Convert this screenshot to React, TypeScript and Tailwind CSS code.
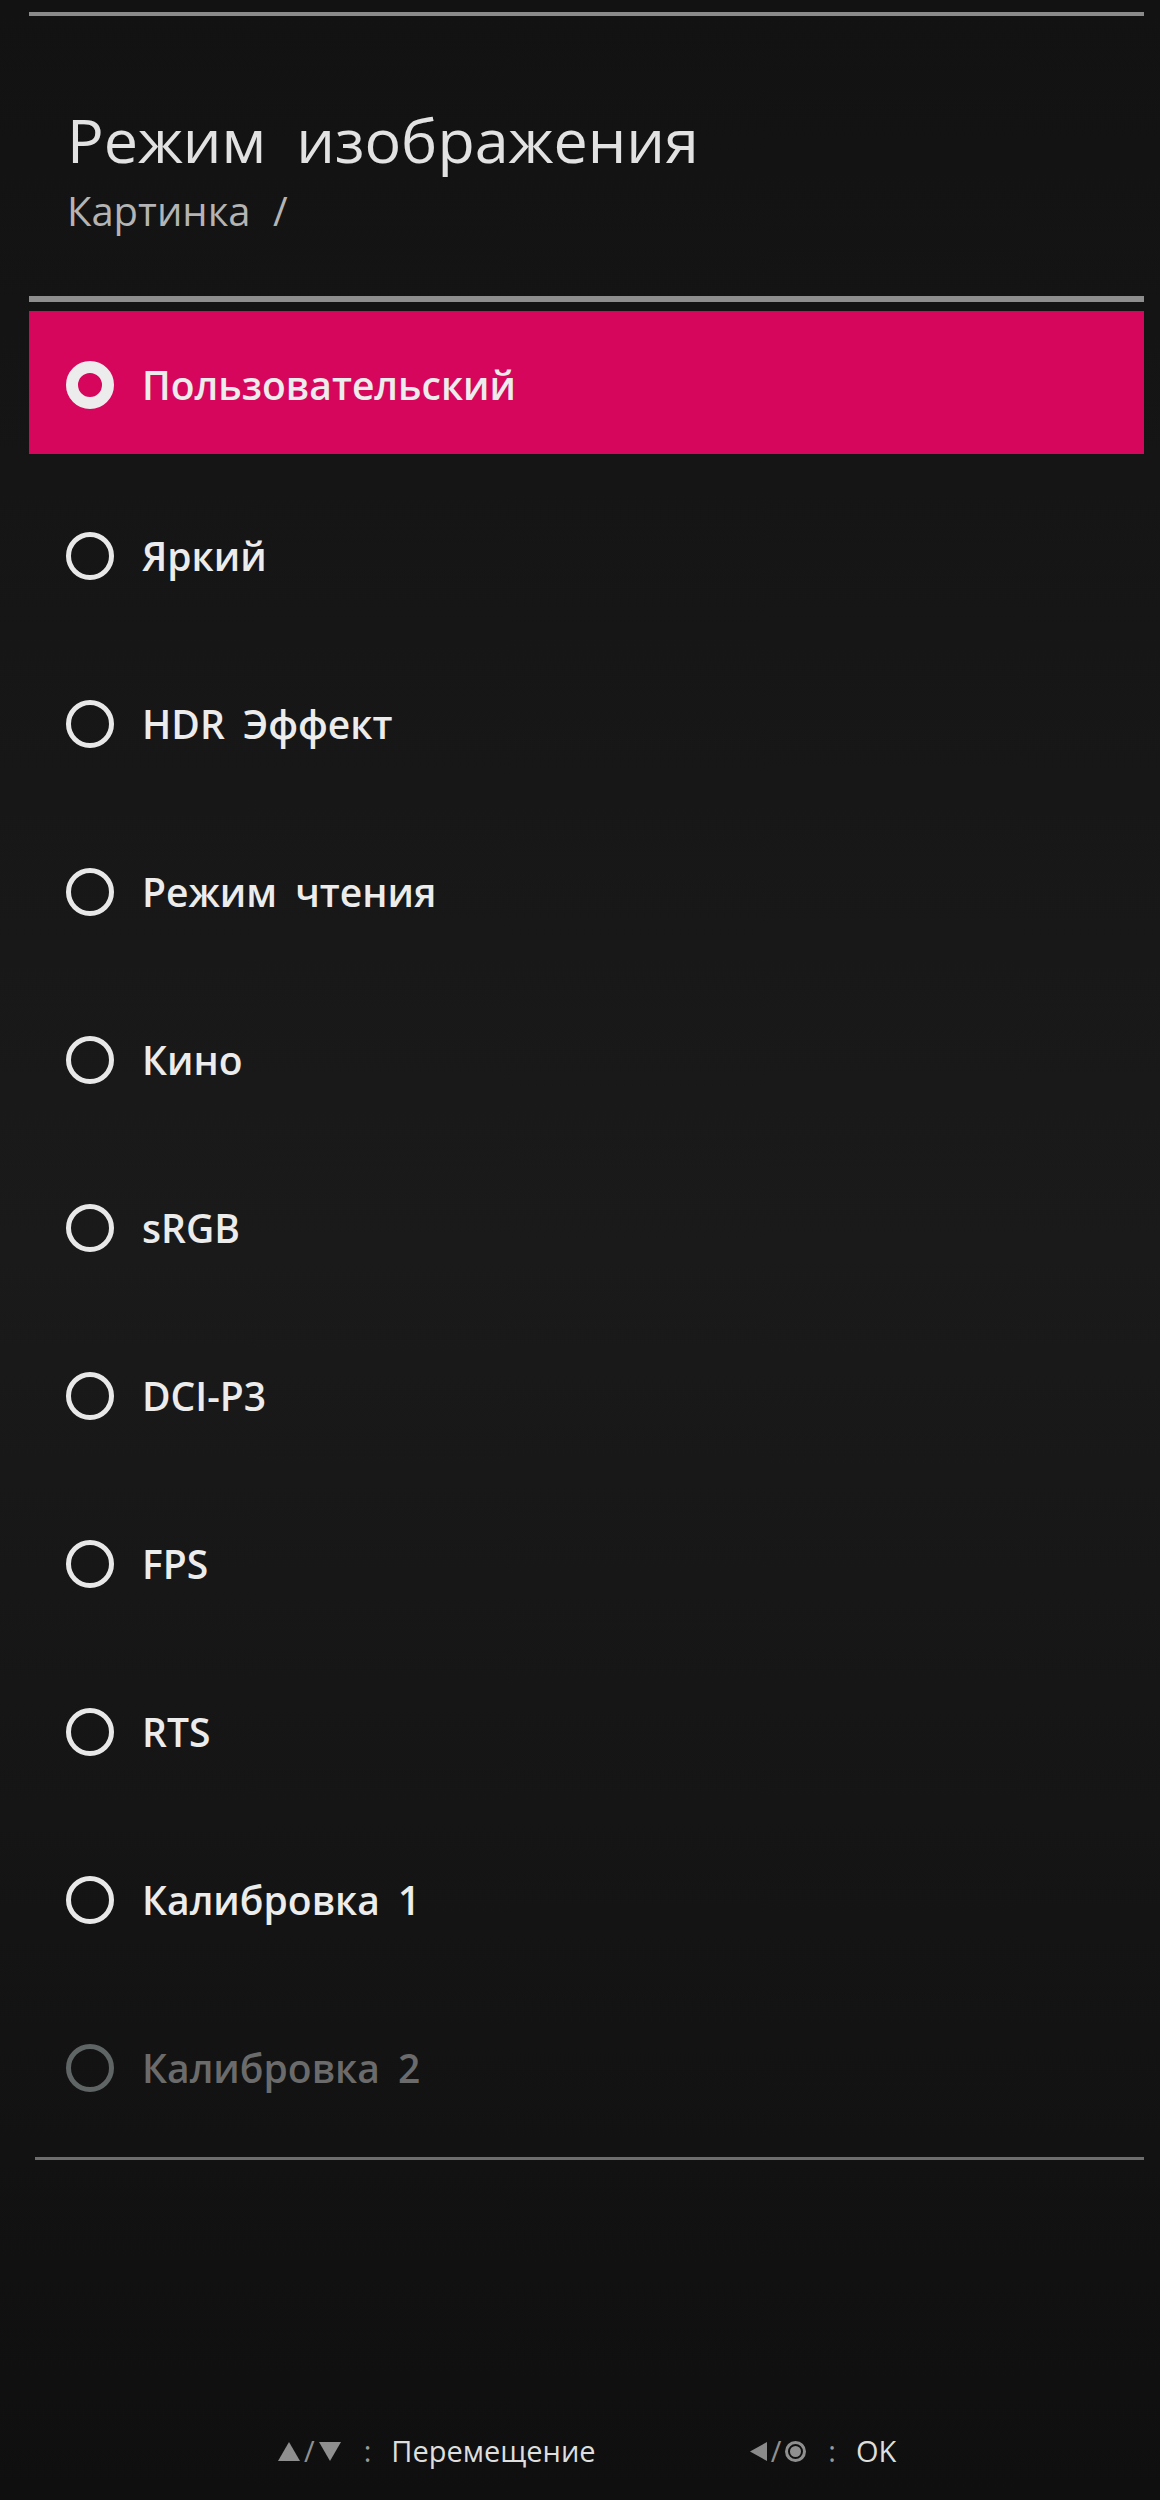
const FONT = "font-['Open_Sans','Noto_Sans',sans-serif]";

interface ModeItem {
  label: string;
  selected?: boolean;
  disabled?: boolean;
}

const MODES: ModeItem[] = [
  { label: 'Пользовательский', selected: true },
  { label: 'Яркий' },
  { label: 'HDR Эффект' },
  { label: 'Режим чтения' },
  { label: 'Кино' },
  { label: 'sRGB' },
  { label: 'DCI-P3' },
  { label: 'FPS' },
  { label: 'RTS' },
  { label: 'Калибровка 1' },
  { label: 'Калибровка 2', disabled: true },
];

function Radio({ selected, disabled }: { selected?: boolean; disabled?: boolean }) {
  if (selected) {
    return <span className="block w-[48px] h-[48px] rounded-full border-[12px] border-[#ececec] bg-[#d6065c] shrink-0" />;
  }
  return (
    <span
      className={
        'block w-[48px] h-[48px] rounded-full border-[5px] shrink-0 ' +
        (disabled ? 'border-[#5f6464]' : 'border-[#e8e8e8]')
      }
    />
  );
}

function ModeRow({ item }: { item: ModeItem }) {
  return (
    <div
      className={
        'flex items-center gap-[28px] pl-[37px] ' +
        (item.selected ? 'h-[143px] bg-[#d6065c] pt-[4px]' : 'h-[168px]')
      }
    >
      <Radio selected={item.selected} disabled={item.disabled} />
      <span
        className={
          'text-[39px] leading-[40px] font-semibold [word-spacing:8px] ' +
          (item.disabled ? 'text-[#6b6b6b]' : 'text-[#ececec]')
        }
      >
        {item.label}
      </span>
    </div>
  );
}

function TriUp() {
  return (
    <svg width="22" height="19" viewBox="0 0 22 19" className="block">
      <polygon points="11,0 22,19 0,19" fill="#8f8f8f" />
    </svg>
  );
}

function TriDown() {
  return (
    <svg width="22" height="19" viewBox="0 0 22 19" className="block">
      <polygon points="0,0 22,0 11,19" fill="#8f8f8f" />
    </svg>
  );
}

function TriLeft() {
  return (
    <svg width="17" height="19" viewBox="0 0 17 19" className="block">
      <polygon points="17,0 17,19 0,9.5" fill="#8a8a8a" />
    </svg>
  );
}

export default function App() {
  return (
    <div className={`w-[1160px] h-[2500px] bg-gradient-to-b from-[#121212] via-[#1a1a1a] to-[#0f0f0f] overflow-hidden ${FONT}`}>
      <div className="ml-[29px] w-[1115px] flex flex-col">
        {/* header */}
        <div className="mt-[12px] h-[4px] bg-[#8a8a8a]" />
        <h1 className="mt-[94px] pl-[38px] text-[61px] leading-[60px] font-normal text-[#e2e2e2] [word-spacing:14px]">
          Режим изображения
        </h1>
        <p className="mt-[21px] pl-[38px] text-[40px] leading-[40px] text-[#b4b4b4] [word-spacing:12px]">
          Картинка /
        </p>
        <div className="mt-[65px] h-[6px] bg-[#8e8e8e]" />

        {/* list */}
        <div className="mt-[9px] flex flex-col">
          <ModeRow item={MODES[0]} />
          <div className="mt-[18px] flex flex-col">
            {MODES.slice(1).map((m) => (
              <ModeRow key={m.label} item={m} />
            ))}
          </div>
        </div>
        <div className="mt-[5px] ml-[6px] h-[3px] bg-[#6e6e6e]" />
      </div>

      {/* footer hints */}
      <div className="mt-[276px] flex items-center text-[29px] leading-[30px] text-[#dedede]">
        <div className="ml-[278px] flex items-center">
          <TriUp />
          <span className="text-[#8f8f8f] mx-[4px]">/</span>
          <TriDown />
          <span className="text-[#9a9a9a] ml-[23px] mr-[20px]">:</span>
          <span>Перемещение</span>
        </div>
        <div className="ml-[154px] flex items-center">
          <TriLeft />
          <span className="text-[#8f8f8f] mx-[4px]">/</span>
          <span className="w-[21px] h-[21px] rounded-full border-[3px] border-[#8f8f8f] flex items-center justify-center">
            <span className="w-[11px] h-[11px] rounded-full bg-[#8f8f8f]" />
          </span>
          <span className="text-[#9a9a9a] ml-[22px] mr-[20px]">:</span>
          <span>OK</span>
        </div>
      </div>
    </div>
  );
}
